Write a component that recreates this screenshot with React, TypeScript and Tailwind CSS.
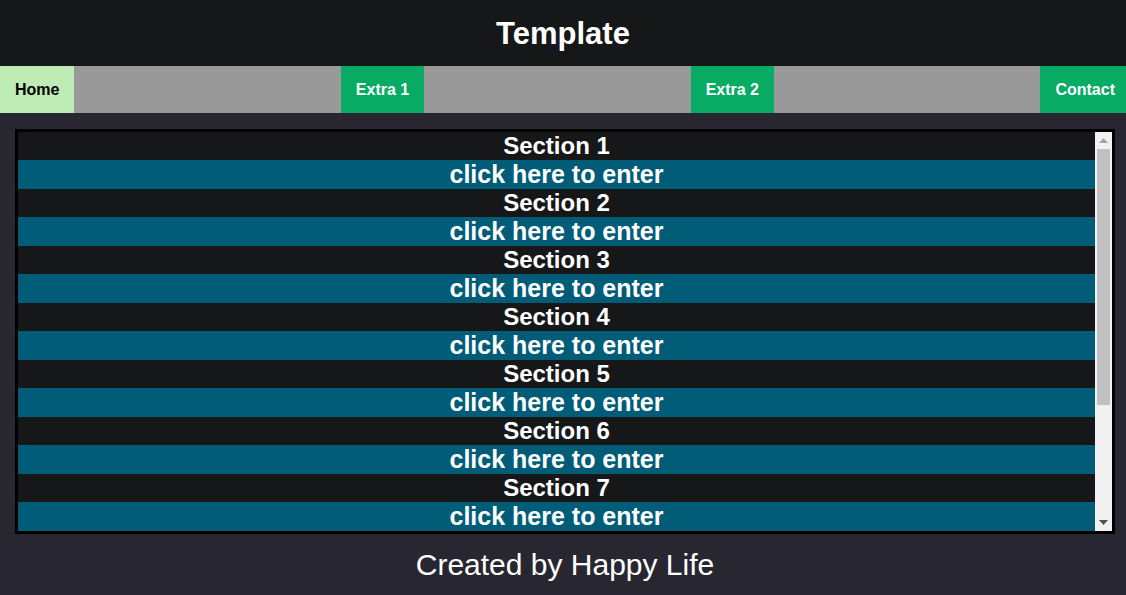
import React from "react";

const sections = [1, 2, 3, 4, 5, 6, 7];

export default function App() {
  return (
    <div className="w-[1126px] min-h-[595px] overflow-hidden bg-[#282731] text-white font-['Arial','Liberation_Sans',sans-serif]">
      <header className="h-[66px] bg-[#161719] flex items-center justify-center">
        <h1 className="text-[31px] font-bold leading-none">Template</h1>
      </header>
      <div className="w-[1130px]">
        <nav className="h-[47px] bg-[#999999] flex justify-between text-[16px] font-bold">
          <a className="h-full px-[15px] flex items-center bg-[#bfecb5] text-black">Home</a>
          <a className="h-full px-[15px] flex items-center bg-[#07ab63] text-white">Extra 1</a>
          <a className="h-full px-[15px] flex items-center bg-[#07ab63] text-white">Extra 2</a>
          <a className="h-full px-[15px] flex items-center bg-[#07ab63] text-white">Contact</a>
        </nav>
        <main className="pt-[16px]">
          <div className="mx-auto w-[1100px] h-[405px] border-[3px] border-black flex bg-[#161719]">
            <div className="flex-1 overflow-hidden">
              {sections.map((n) => (
                <div key={n} className="font-bold text-center">
                  <div className="h-[28px] bg-[#161719] text-[24px] leading-[28px]">Section {n}</div>
                  <div className="h-[29px] bg-[#015c78] text-[25px] leading-[29px]">click here to enter</div>
                </div>
              ))}
            </div>
            <div className="w-[17px] bg-[#f1f1f1] flex flex-col items-center">
              <div className="h-[17px] flex items-center justify-center">
                <svg width="9" height="5" viewBox="0 0 9 5">
                  <polygon points="0,5 9,5 4.5,0" fill="#a3a3a3" />
                </svg>
              </div>
              <div className="w-[13px] h-[256px] bg-[#c1c1c1]" />
              <div className="flex-1" />
              <div className="h-[17px] flex items-center justify-center">
                <svg width="9" height="5" viewBox="0 0 9 5">
                  <polygon points="0,0 9,0 4.5,5" fill="#505050" />
                </svg>
              </div>
            </div>
          </div>
        </main>
        <footer className="h-[61px] flex items-center justify-center text-[30px]">
          Created by Happy Life
        </footer>
      </div>
    </div>
  );
}
